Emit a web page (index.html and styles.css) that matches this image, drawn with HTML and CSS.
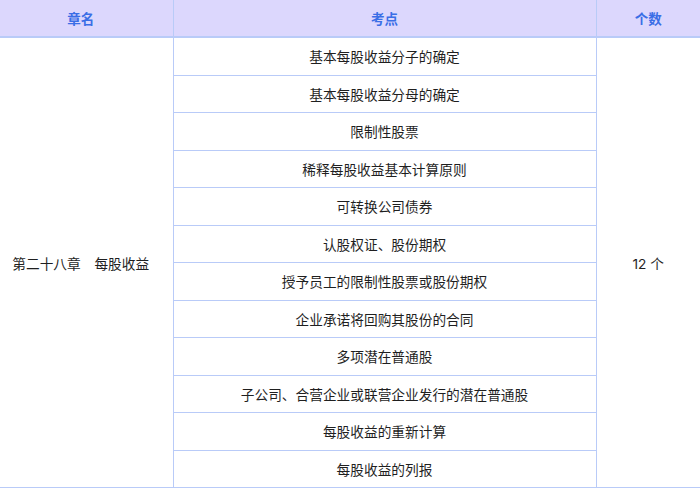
FILE: index.html
```html
<!DOCTYPE html>
<html lang="zh">
<head>
<meta charset="utf-8">
<link rel="stylesheet" href="styles.css">
</head>
<body>
<table class="grid">
  <colgroup>
    <col class="c1"><col class="c2"><col class="c3">
  </colgroup>
  <thead>
    <tr><th>章名</th><th>考点</th><th>个数</th></tr>
  </thead>
  <tbody>
    <tr><td class="chapter" rowspan="12">第二十八章　每股收益</td><td>基本每股收益分子的确定</td><td class="count" rowspan="12">12 个</td></tr>
    <tr><td>基本每股收益分母的确定</td></tr>
    <tr><td>限制性股票</td></tr>
    <tr><td>稀释每股收益基本计算原则</td></tr>
    <tr><td>可转换公司债券</td></tr>
    <tr><td>认股权证、股份期权</td></tr>
    <tr><td>授予员工的限制性股票或股份期权</td></tr>
    <tr><td>企业承诺将回购其股份的合同</td></tr>
    <tr><td>多项潜在普通股</td></tr>
    <tr><td>子公司、合营企业或联营企业发行的潜在普通股</td></tr>
    <tr><td>每股收益的重新计算</td></tr>
    <tr><td>每股收益的列报</td></tr>
  </tbody>
</table>
</body>
</html>
```
FILE: styles.css
```css
html, body {
  margin: 0;
  padding: 0;
  background: #ffffff;
}
body {
  font-family: Inter, "Noto Sans CJK SC", sans-serif;
  font-size: 13.7px;
  color: #1f1f1f;
  overflow: hidden;
}
.grid {
  border-collapse: collapse;
  table-layout: fixed;
  width: 711px;
  margin-left: -11px;
}
.c1 { width: 184px; }
.c2 { width: 423px; }
.c3 { width: 104px; }
.grid th {
  background: #dcd7fd;
  color: #3a6ee6;
  font-weight: 600;
  font-size: 13.5px;
  height: 36px;
  padding: 0;
  text-align: center;
  border: 1px solid #b9cbf8;
  border-top: none;
  border-bottom: 2px solid #b9cbf8;
}
.grid td {
  height: 36.5px;
  padding: 0;
  text-align: center;
  border: 1px solid #b9cbf8;
}
.grid th:first-child,
.grid td.chapter { border-left: none; }
.grid th:last-child,
.grid td.count { border-right: none; }
```
